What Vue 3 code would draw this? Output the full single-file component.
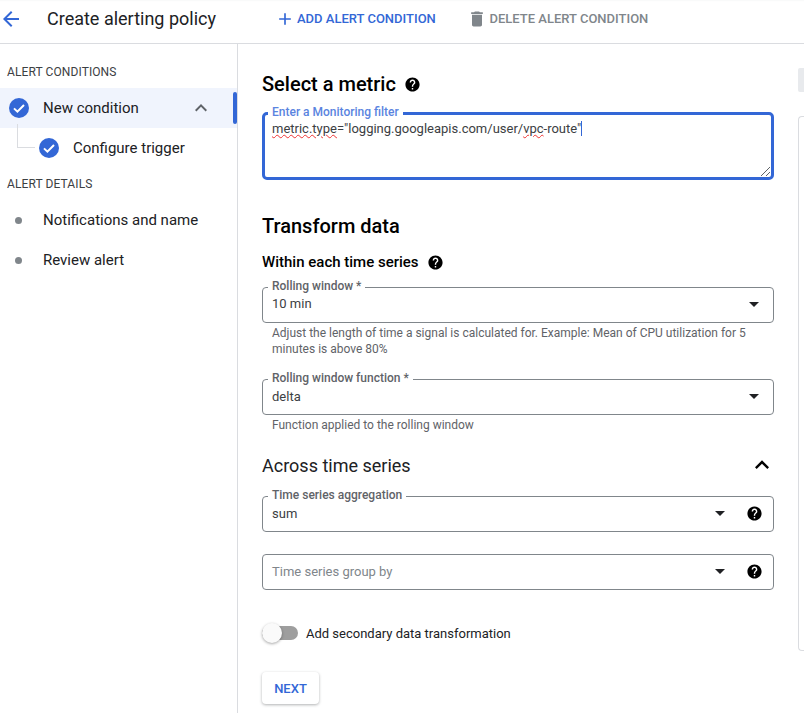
<script setup>
const steps = [
  { label: 'Notifications and name' },
  { label: 'Review alert' }
]
const helpPath = 'M12 2C6.48 2 2 6.48 2 12s4.48 10 10 10 10-4.48 10-10S17.52 2 12 2zm1 17h-2v-2h2v2zm2.07-7.75l-.9.92C13.45 12.9 13 13.5 13 15h-2v-.5c0-1.1.45-2.1 1.17-2.83l1.24-1.26c.37-.36.59-.86.59-1.41 0-1.1-.9-2-2-2s-2 .9-2 2H8c0-2.21 1.79-4 4-4s4 1.79 4 4c0 .88-.36 1.68-.93 2.25z'
</script>

<template>
  <div class="page">
    <header class="topbar">
      <svg class="back" viewBox="0 0 24 24" width="24" height="24">
        <path d="M20 11H7.83l5.59-5.59L12 4l-8 8 8 8 1.41-1.41L7.83 13H20v-2z" fill="#3367d6" />
      </svg>
      <h1 class="title">Create alerting policy</h1>
      <button class="action add">
        <svg viewBox="0 0 24 24" width="20" height="20"><path d="M19 13h-6v6h-2v-6H5v-2h6V5h2v6h6v2z" fill="#3367d6" /></svg>
        ADD ALERT CONDITION
      </button>
      <button class="action del">
        <svg viewBox="0 0 24 24" width="20" height="20"><path d="M6 19c0 1.1.9 2 2 2h8c1.1 0 2-.9 2-2V7H6v12zM19 4h-3.5l-1-1h-5l-1 1H5v2h14V4z" fill="#80868b" /></svg>
        DELETE ALERT CONDITION
      </button>
    </header>

    <div class="body">
      <aside class="sidebar">
        <div class="group-label first">ALERT CONDITIONS</div>
        <div class="step active">
          <svg class="check" viewBox="0 0 20 20" width="20" height="20">
            <circle cx="10" cy="10" r="10" fill="#3367d6" />
            <path d="M5 10.4l3.4 3.3L15 7" fill="none" stroke="#fff" stroke-width="2" />
          </svg>
          <span class="step-label">New condition</span>
          <svg class="chev" viewBox="0 0 24 24" width="24" height="24"><path d="M7.41 15.41L12 10.83l4.59 4.58L18 14l-6-6-6 6z" fill="#5f6368" /></svg>
        </div>
        <div class="step sub">
          <span class="connector"></span>
          <svg class="check" viewBox="0 0 20 20" width="20" height="20">
            <circle cx="10" cy="10" r="10" fill="#3367d6" />
            <path d="M5 10.4l3.4 3.3L15 7" fill="none" stroke="#fff" stroke-width="2" />
          </svg>
          <span class="step-label">Configure trigger</span>
        </div>
        <div class="group-label second">ALERT DETAILS</div>
        <div v-for="s in steps" :key="s.label" class="step">
          <span class="dot"></span>
          <span class="step-label">{{ s.label }}</span>
        </div>
      </aside>

      <main class="content">
        <div class="form">
          <h2 class="heading metric-heading">
            Select a metric
            <svg viewBox="0 0 24 24" width="17" height="17"><path :d="helpPath" fill="#000" /></svg>
          </h2>

          <div class="filter">
            <span class="filter-label">Enter a Monitoring filter</span>
            <div class="filter-text"><span class="squiggle">metric.type</span>="logging.googleapis.com/user/<span class="squiggle">vpc</span>-route"<span class="caret"></span></div>
            <svg class="grip" viewBox="0 0 12 12" width="12" height="12">
              <path d="M11 2L2 11M11 7L7 11" stroke="#5f6368" stroke-width="1" fill="none" />
            </svg>
          </div>

          <h2 class="heading transform">Transform data</h2>
          <h3 class="subheading">
            Within each time series
            <svg viewBox="0 0 24 24" width="17" height="17"><path :d="helpPath" fill="#000" /></svg>
          </h3>

          <div class="field first-field">
            <span class="field-label">Rolling window *</span>
            <span class="value">10 min</span>
            <span class="arrow"></span>
          </div>
          <p class="hint">Adjust the length of time a signal is calculated for. Example: Mean of CPU utilization for 5 minutes is above 80%</p>

          <div class="field second-field">
            <span class="field-label">Rolling window function *</span>
            <span class="value">delta</span>
            <span class="arrow"></span>
          </div>
          <p class="hint">Function applied to the rolling window</p>

          <div class="across">
            <span>Across time series</span>
            <svg viewBox="0 0 24 24" width="28" height="28"><path d="M7.41 15.41L12 10.83l4.59 4.58L18 14l-6-6-6 6z" fill="#000" /></svg>
          </div>

          <div class="field agg">
            <span class="field-label">Time series aggregation</span>
            <span class="value">sum</span>
            <span class="arrow"></span>
            <svg class="field-help" viewBox="0 0 24 24" width="17" height="17"><path :d="helpPath" fill="#000" /></svg>
          </div>

          <div class="field group-by">
            <span class="value placeholder">Time series group by</span>
            <span class="arrow"></span>
            <svg class="field-help" viewBox="0 0 24 24" width="17" height="17"><path :d="helpPath" fill="#000" /></svg>
          </div>

          <div class="toggle-row">
            <span class="toggle"><span class="knob"></span></span>
            <span>Add secondary data transformation</span>
          </div>

          <button class="next">NEXT</button>
        </div>

        <div class="side-panel">
          <div class="side-tab"></div>
          <div class="side-card"></div>
        </div>
      </main>
    </div>
  </div>
</template>

<style>
html, body {
  margin: 0;
  background: #fff;
  overflow: hidden;
}
</style>

<style scoped>
.page {
  width: 804px;
  height: 713px;
  overflow: hidden;
  font-family: Roboto, "Liberation Sans", sans-serif;
  color: #202124;
  display: flex;
  flex-direction: column;
}

.topbar {
  height: 37px;
  padding-bottom: 6px;
  flex: none;
  display: flex;
  align-items: center;
  border-bottom: 1px solid #dadce0;
  box-shadow: inset 0 2px 2px -2px #e8eaed;
}

.back {
  margin-left: -1px;
  flex: none;
}

.title {
  margin: 0 0 0 24px;
  width: 227.5px;
  font-size: 18px;
  font-weight: 400;
  color: #202124;
  white-space: nowrap;
}

.action {
  display: flex;
  align-items: center;
  gap: 2.5px;
  padding: 0;
  border: none;
  background: none;
  font-family: inherit;
  font-size: 13px;
  font-weight: 500;
  white-space: nowrap;
}

.add {
  color: #3367d6;
  width: 192.5px;
}

.del {
  color: #80868b;
}

.body {
  flex: 1;
  display: flex;
  min-height: 0;
}

.sidebar {
  width: 237px;
  flex: none;
  border-right: 1px solid #dadce0;
}

.group-label {
  height: 24px;
  line-height: 24px;
  padding-left: 7px;
  font-size: 12px;
  font-weight: 400;
  color: #3c4043;
  letter-spacing: 0.1px;
}

.group-label.first {
  margin-top: 16px;
  margin-bottom: 4px;
}

.group-label.second {
  margin-top: 4px;
  margin-bottom: 4px;
}

.step {
  position: relative;
  height: 40px;
  display: flex;
  align-items: center;
  font-size: 15px;
  color: #202124;
}

.step.active {
  background: #f0f4fd;
}

.step.active::after {
  content: "";
  position: absolute;
  right: 0;
  top: 4px;
  width: 4px;
  height: 32px;
  border-radius: 2px;
  background: #3367d6;
}

.check {
  flex: none;
  margin-left: 9px;
}

.step-label {
  margin-left: 14px;
  white-space: nowrap;
}

.chev {
  position: absolute;
  left: 189px;
  top: 8px;
}

.sub .check {
  margin-left: 39px;
}

.connector {
  position: absolute;
  left: 17px;
  top: -4px;
  width: 17px;
  height: 23px;
  border-left: 1px solid #dadce0;
  border-bottom: 1px solid #dadce0;
}

.dot {
  width: 7px;
  height: 7px;
  margin-left: 15px;
  margin-right: 7px;
  border-radius: 50%;
  background: #80868b;
  flex: none;
}

.content {
  flex: 1;
  display: flex;
  min-width: 0;
}

.form {
  width: 512px;
  margin-left: 24px;
  flex: none;
}

.heading {
  margin: 0;
  font-size: 20px;
  font-weight: 500;
  color: #000;
  display: flex;
  align-items: center;
  gap: 8px;
  line-height: 24px;
}

.metric-heading {
  margin-top: 28px;
}

.filter {
  position: relative;
  margin-top: 16px;
  height: 68px;
  box-sizing: border-box;
  border: 3px solid #3367d6;
  border-radius: 5px;
  width: 512px;
}

.filter-label {
  position: absolute;
  left: 3px;
  top: -10px;
  padding: 0 4px;
  background: #fff;
  font-size: 12px;
  font-weight: 500;
  line-height: 14px;
  color: #5a84e0;
}

.filter-text {
  padding: 5px 0 0 7px;
  font-size: 13px;
  line-height: 18px;
  color: #3c4043;
  white-space: nowrap;
}

.squiggle {
  text-decoration: underline wavy #e33;
  text-decoration-thickness: 1px;
  text-underline-offset: 1px;
}

.caret {
  display: inline-block;
  width: 1px;
  height: 15px;
  background: #3367d6;
  vertical-align: -3px;
}

.grip {
  position: absolute;
  right: 0;
  bottom: 0;
}

.transform {
  margin-top: 34px;
}

.subheading {
  margin: 14px 0 0;
  font-size: 15px;
  font-weight: 500;
  color: #000;
  display: flex;
  align-items: center;
  gap: 8px;
  line-height: 20px;
}

.field {
  position: relative;
  box-sizing: border-box;
  height: 36px;
  border: 1px solid #80868b;
  border-radius: 4px;
  display: flex;
  align-items: center;
}

.first-field {
  margin-top: 15px;
}

.second-field {
  margin-top: 22px;
}

.field-label {
  position: absolute;
  left: 5px;
  top: -9px;
  padding: 0 4px;
  background: #fff;
  font-size: 12px;
  font-weight: 500;
  line-height: 14px;
  color: #5f6368;
  white-space: nowrap;
}

.value {
  margin-left: 9px;
  margin-top: -2px;
  font-size: 13px;
  color: #3c4043;
}

.first-field .value {
  margin-top: -4px;
}

.placeholder {
  color: #80868b;
  margin-top: -1px;
}

.arrow {
  position: absolute;
  right: 14px;
  top: 14px;
  width: 0;
  height: 0;
  border-left: 5px solid transparent;
  border-right: 5px solid transparent;
  border-top: 5px solid #202124;
}

.agg .arrow,
.group-by .arrow {
  right: 48px;
}

.field-help {
  position: absolute;
  right: 10.5px;
  top: 7.5px;
}

.hint {
  margin: 2px 0 0;
  padding-left: 10px;
  padding-right: 20px;
  font-size: 12px;
  line-height: 16px;
  color: #5f6368;
}

.across {
  margin-top: 20px;
  height: 24px;
  display: flex;
  align-items: center;
  justify-content: space-between;
  font-size: 18px;
  font-weight: 400;
  color: #202124;
}

.across svg {
  margin-right: -2px;
}

.agg {
  margin-top: 19px;
}

.group-by {
  margin-top: 22px;
}

.toggle-row {
  margin-top: 33px;
  display: flex;
  align-items: center;
  gap: 8px;
  font-size: 13px;
  color: #202124;
  height: 20px;
}

.toggle {
  position: relative;
  width: 36px;
  height: 14px;
  border-radius: 7px;
  background: #9e9e9e;
  flex: none;
}

.knob {
  position: absolute;
  left: 0;
  top: -3px;
  width: 20px;
  height: 20px;
  border-radius: 50%;
  background: #fafafa;
  box-shadow: 0 1px 3px rgba(0, 0, 0, 0.35);
}

.next {
  display: block;
  margin-top: 29px;
  width: 57px;
  height: 32px;
  padding: 0;
  border: none;
  border-radius: 4px;
  background: #fff;
  box-shadow: 0 1px 3px rgba(60, 64, 67, 0.4);
  color: #3367d6;
  font-family: inherit;
  font-size: 13px;
  font-weight: 500;
}

.side-panel {
  margin-left: 24px;
  flex: 1;
  min-width: 0;
}

.side-tab {
  margin-top: 24px;
  height: 24px;
  background: #e8eaed;
  border-radius: 2px 0 0 2px;
}

.side-card {
  margin-top: 24px;
  height: 535px;
  box-sizing: border-box;
  border: 1px solid #dadce0;
  border-right: none;
  border-radius: 4px 0 0 4px;
}
</style>
